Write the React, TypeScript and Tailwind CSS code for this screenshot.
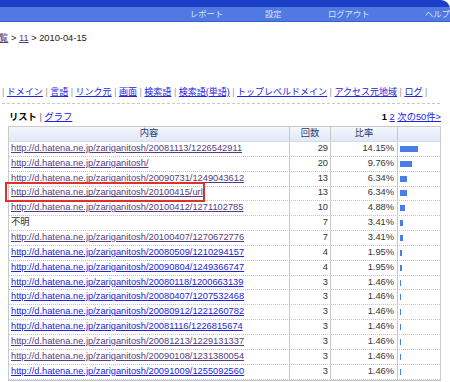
import React from 'react';

type Row = {
  label: string;
  link: boolean;
  visited?: boolean;
  count: number;
  ratio: string;
  bar: number;
};

const base = 'http://d.hatena.ne.jp/zariganitosh/';

const rows: Row[] = [
  { label: base + '20081113/1226542911', link: true, visited: true, count: 29, ratio: '14.15%', bar: 18 },
  { label: base, link: true, visited: true, count: 20, ratio: '9.76%', bar: 12 },
  { label: base + '20090731/1249043612', link: true, visited: true, count: 13, ratio: '6.34%', bar: 7 },
  { label: base + '20100415/url', link: true, visited: true, count: 13, ratio: '6.34%', bar: 7 },
  { label: base + '20100412/1271102785', link: true, visited: true, count: 10, ratio: '4.88%', bar: 5 },
  { label: '不明', link: false, count: 7, ratio: '3.41%', bar: 3 },
  { label: base + '20100407/1270672776', link: true, visited: true, count: 7, ratio: '3.41%', bar: 3 },
  { label: base + '20080509/1210294157', link: true, count: 4, ratio: '1.95%', bar: 2 },
  { label: base + '20090804/1249366747', link: true, count: 4, ratio: '1.95%', bar: 2 },
  { label: base + '20080118/1200663139', link: true, count: 3, ratio: '1.46%', bar: 1 },
  { label: base + '20080407/1207532468', link: true, count: 3, ratio: '1.46%', bar: 1 },
  { label: base + '20080912/1221260782', link: true, count: 3, ratio: '1.46%', bar: 1 },
  { label: base + '20081116/1226815674', link: true, count: 3, ratio: '1.46%', bar: 1 },
  { label: base + '20081213/1229131337', link: true, visited: true, count: 3, ratio: '1.46%', bar: 1 },
  { label: base + '20090108/1231380054', link: true, visited: true, count: 3, ratio: '1.46%', bar: 1 },
  { label: base + '20091009/1255092560', link: true, count: 3, ratio: '1.46%', bar: 1 },
];

const tabs = ['ドメイン', '言語', 'リンク元', '画面', '検索語', '検索語(単語)', 'トップレベルドメイン', 'アクセス元地域', 'ログ'];

const App: React.FC = () => {
  return (
    <div
      className="relative w-[450px] h-[382px] overflow-hidden bg-white text-[9.3px] text-[#222]"
      style={{ fontFamily: '"Liberation Sans", "Noto Sans CJK JP", sans-serif' }}
    >
      {/* top bar */}
      <div className="rounded-tr-[9px] overflow-hidden">
        <div className="h-[7px] bg-[#1b3ec6]" />
        <div className="h-[15px] bg-[#5079e1] border-b border-[#3a5fcf] flex items-center pl-[190px] text-[8.3px] text-[#dbe4ff] whitespace-nowrap">
          <span className="w-[75px] shrink-0">レポート</span>
          <span className="w-[63px] shrink-0">設定</span>
          <span className="w-[97px] shrink-0">ログアウト</span>
          <span className="shrink-0">ヘルプ</span>
        </div>
      </div>

      {/* breadcrumb */}
      <div className="mt-[10px] h-[12px] leading-[12px] whitespace-nowrap ml-[-1px]">
        <a className="underline text-[#553c80]">覧</a> &gt; <a className="underline text-[#553c80]">11</a> &gt; 2010-04-15
      </div>

      {/* tab links */}
      <div className="mt-[42px] h-[12px] leading-[12px] pl-[2px] whitespace-nowrap text-[9px] text-[#999]">
        |
        {tabs.map((t) => (
          <React.Fragment key={t}>
            {' '}
            <a className="underline text-[#2222dd]">{t}</a> |
          </React.Fragment>
        ))}
      </div>

      <div className="mt-[5px] ml-[2px] w-[438px] border-t border-dashed border-[#c8c8c8]" />

      {/* list / graph + pager */}
      <div className="mt-[7px] h-[12px] leading-[12px] w-[441px] pl-[9px] flex justify-between whitespace-nowrap">
        <div>
          <span className="font-bold text-black">リスト</span> <span className="text-[#666]">|</span>{' '}
          <a className="underline text-[#2222dd]">グラフ</a>
        </div>
        <div>
          <span className="font-bold text-black">1</span> <a className="underline text-[#2222dd]">2</a>{' '}
          <a className="underline text-[#2222dd]">次の50件&gt;</a>
        </div>
      </div>

      {/* table */}
      <div className="mt-[3px] ml-[8px] w-[433px] border border-[#c9c9c9]">
        <div className="flex h-[15px] bg-gradient-to-b from-[#f3f6fc] to-[#e1e8f7] text-[#2c3a6e] border-b border-[#d5dbe8]">
          <div className="w-[281px] border-r border-[#c9c9c9] flex items-center justify-center">内容</div>
          <div className="w-[41px] border-r border-[#c9c9c9] flex items-center justify-center">回数</div>
          <div className="w-[67px] border-r border-[#c9c9c9] flex items-center justify-center">比率</div>
          <div className="flex-1" />
        </div>
        {rows.map((r, i) => (
          <div key={i} className="flex h-[14.85px] border-b border-dotted border-[#c4c4c4] whitespace-nowrap">
            <div className="w-[281px] border-r border-[#c9c9c9] flex items-center pl-[2px] overflow-hidden">
              {r.link ? (
                <a className={r.visited ? 'underline text-[#553c80]' : 'underline text-[#2222dd]'}>{r.label}</a>
              ) : (
                <span className="text-[#333]">{r.label}</span>
              )}
            </div>
            <div className="w-[41px] border-r border-[#c9c9c9] flex items-center justify-end pr-[2px] text-[#333]">
              {r.count}
            </div>
            <div className="w-[67px] border-r border-[#c9c9c9] flex items-center justify-end pr-[3px] text-[#333]">
              {r.ratio}
            </div>
            <div className="flex-1 flex items-center pl-[2px]">
              <div className="h-[6px] bg-[#4b7de6]" style={{ width: r.bar }} />
            </div>
          </div>
        ))}
      </div>

      {/* highlight box */}
      <div className="absolute left-[5px] top-[182px] w-[200px] h-[20px] border-2 border-[#e0302a]" />
    </div>
  );
};

export default App;
